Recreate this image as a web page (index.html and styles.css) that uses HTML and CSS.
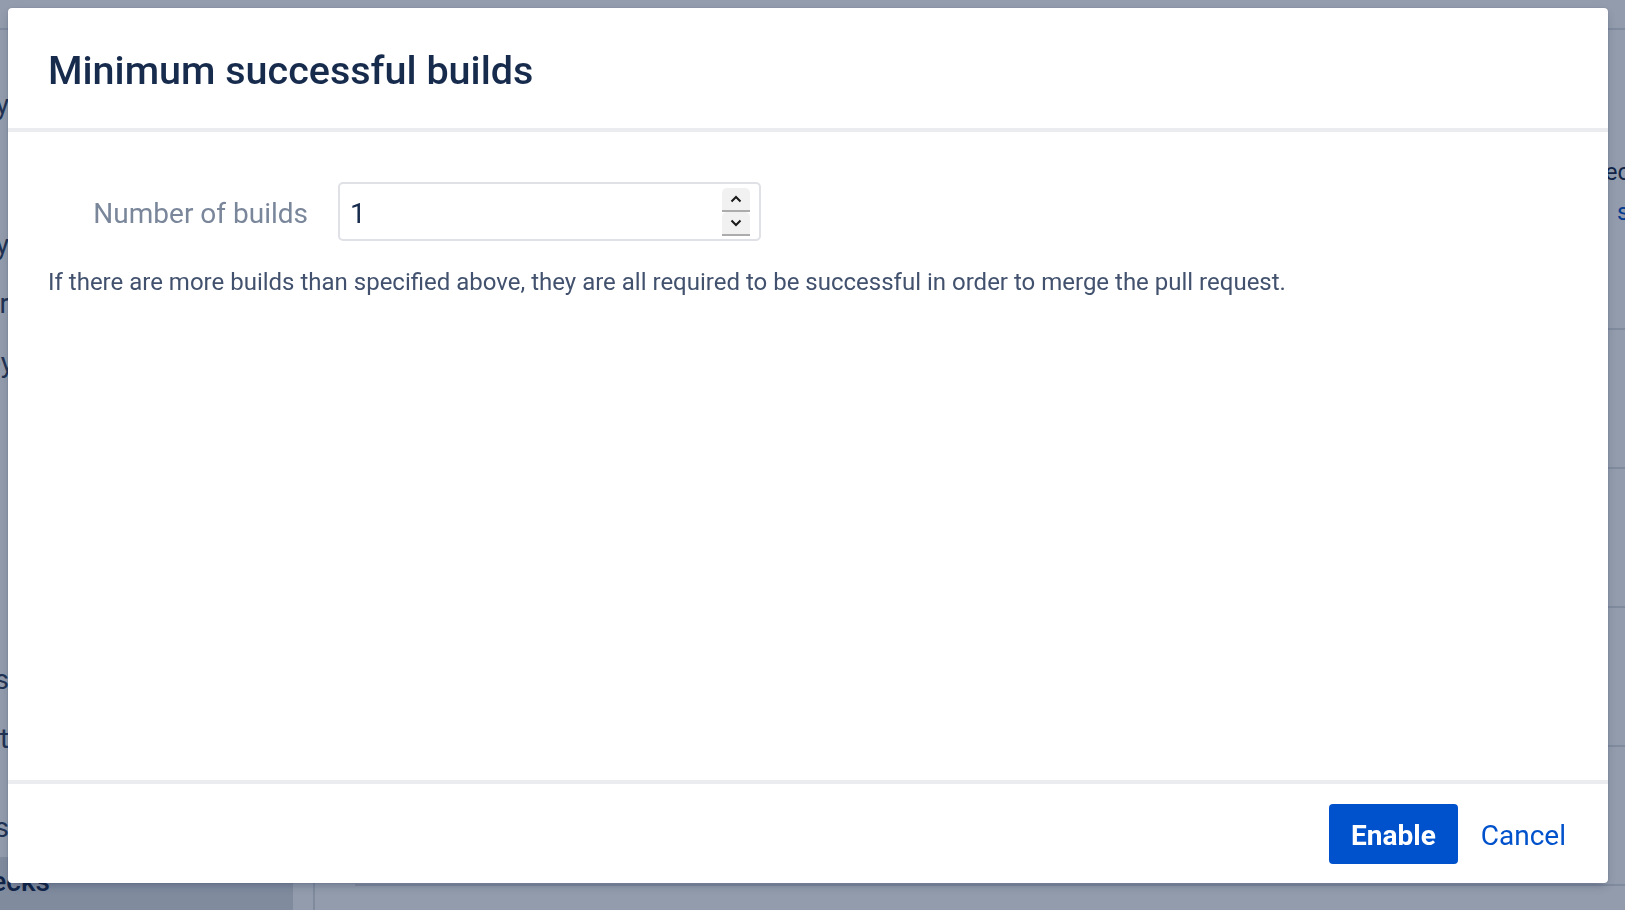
FILE: index.html
```html
<!DOCTYPE html>
<html lang="en">
<head>
<meta charset="utf-8">
<title>Minimum successful builds</title>
<link rel="stylesheet" href="styles.css">
</head>
<body>
  <div class="page">
    <header class="topbar"></header>
    <div class="layout">
      <nav class="sidebar">
        <div class="nav-heading"><span class="nav-clip"><span>Repository</span></span></div>
        <div class="nav-group first">
          <div class="nav-item"><span class="nav-clip"><span>Security</span></span></div>
          <div class="nav-item"><span class="nav-clip"><span>Branch manager</span></span></div>
          <div class="nav-item"><span class="nav-clip late"><span>Access key</span></span></div>
        </div>
        <div class="nav-group second">
          <div class="nav-item"><span class="nav-clip"><span>Hooks</span></span></div>
          <div class="nav-item"><span class="nav-clip"><span>Default reviewers list</span></span></div>
          <div class="nav-item spaced"><span class="nav-clip"><span>Auto-merge settings</span></span></div>
        </div>
        <div class="nav-item selected"><span class="nav-clip wide"><span>Merge checks</span></span></div>
      </nav>
      <main class="content">
        <div class="summary">
          <div></div>
          <div class="summary-side">
            <p class="side-text">Received</p>
            <p class="side-link">settings</p>
          </div>
        </div>
        <div class="row"></div>
        <div class="row"></div>
        <div class="row"></div>
        <div class="row"></div>
      </main>
    </div>
  </div>

  <div class="blanket">
    <section class="dialog" role="dialog" aria-labelledby="dlg-title">
      <header class="dialog-header">
        <h1 id="dlg-title" class="dialog-title">Minimum successful builds</h1>
      </header>
      <div class="dialog-body">
        <div class="field-row">
          <label class="field-label" for="builds">Number of builds</label>
          <div class="number-input">
            <span class="number-value" id="builds">1</span>
            <span class="spinner">
              <span class="spin-btn">
                <svg width="12" height="8" viewBox="0 0 12 8"><polyline points="1.5,6.5 6,2 10.5,6.5" fill="none" stroke="#1a1a1a" stroke-width="2"/></svg>
              </span>
              <span class="spin-btn">
                <svg width="12" height="8" viewBox="0 0 12 8"><polyline points="1.5,1.5 6,6 10.5,1.5" fill="none" stroke="#1a1a1a" stroke-width="2"/></svg>
              </span>
            </span>
          </div>
        </div>
        <p class="help">If there are more builds than specified above, they are all required to be successful in order to merge the pull request.</p>
      </div>
      <footer class="dialog-footer">
        <button class="btn btn-primary" type="button">Enable</button>
        <button class="btn btn-link" type="button">Cancel</button>
      </footer>
    </section>
  </div>
</body>
</html>
```

FILE: styles.css
```css
* { box-sizing: border-box; }

html, body {
  margin: 0;
  padding: 0;
}

body {
  width: 1625px;
  height: 910px;
  overflow: hidden;
  background: #ffffff;
  font-family: Roboto, "Noto Sans", "Liberation Sans", sans-serif;
  color: #172b4d;
}

/* ---------- background page ---------- */
.page {
  height: 910px;
  display: flex;
  flex-direction: column;
}

.topbar {
  height: 30px;
  border-bottom: 2px solid #dfe1e6;
  flex: none;
}

.layout {
  flex: 1;
  display: flex;
}

.sidebar {
  width: 315px;
  flex: none;
  padding-right: 20px;
  border-right: 2px solid #dfe1e6;
  display: flex;
  flex-direction: column;
  font-size: 28px;
  color: #344563;
}

.nav-heading {
  height: 59px;
  margin-top: 45px;
  display: flex;
  align-items: center;
}

.nav-group.first { margin-top: 81px; }
.nav-group.second { margin-top: 258px; }

.nav-item {
  height: 59px;
  display: flex;
  align-items: center;
}

.nav-item.spaced { margin-top: 30px; }

.nav-clip {
  width: 9px;
  display: flex;
  justify-content: flex-end;
  white-space: nowrap;
}

.nav-clip.late { width: 14px; }
.nav-clip.wide { width: 50px; }

.nav-item.selected {
  margin-top: 0;
  height: 58px;
  padding-bottom: 10px;
  background: #dfe1e6;
  border-radius: 0 6px 6px 0;
  font-weight: 500;
  color: #172b4d;
}

.content {
  flex: 1;
  padding-left: 40px;
  display: flex;
  flex-direction: column;
}

.summary {
  height: 300px;
  border-bottom: 2px solid #dfe1e6;
  display: grid;
  grid-template-columns: 1fr 35px;
  padding-top: 122px;
}

.summary-side {
  white-space: nowrap;
  font-size: 24px;
  line-height: 40px;
}

.summary-side p { margin: 0; }
.side-text { color: #172b4d; }
.side-link { color: #0052cc; text-indent: 27px; }

.row {
  height: 139px;
  border-bottom: 2px solid #dfe1e6;
  flex: none;
}

/* ---------- modal ---------- */
.blanket {
  position: fixed;
  inset: 0;
  background: rgba(9, 30, 66, 0.44);
  padding: 8px 0 0 8px;
}

.dialog {
  width: 1600px;
  height: 875px;
  background: #ffffff;
  border-radius: 4px;
  display: flex;
  flex-direction: column;
  box-shadow: 0 4px 10px -2px rgba(9, 30, 66, 0.3), 0 0 1px rgba(9, 30, 66, 0.31);
}

.dialog-header {
  height: 124px;
  flex: none;
  padding: 6px 40px 0;
  display: flex;
  align-items: center;
  border-bottom: 4px solid #ebecf0;
}

.dialog-title {
  margin: 0;
  font-size: 39.5px;
  line-height: 48px;
  font-weight: 500;
  color: #172b4d;
}

.dialog-body {
  flex: 1;
  padding: 50px 40px 0;
}

.field-row {
  display: flex;
  align-items: center;
}

.field-label {
  width: 260px;
  margin-right: 30px;
  padding-top: 3px;
  text-align: right;
  font-size: 28px;
  color: #7a869a;
}

.number-input {
  width: 423px;
  height: 59px;
  border: 2px solid #dfe1e6;
  border-radius: 5px;
  display: flex;
  align-items: center;
  padding: 0 9px 0 10px;
  font-size: 28px;
  color: #172b4d;
}

.number-value { flex: 1; padding-top: 3px; }

.spinner {
  display: flex;
  flex-direction: column;
}

.spin-btn {
  width: 28px;
  height: 24px;
  background: #f1f1f1;
  border-radius: 5px 5px 0 0;
  border-bottom: 2px solid #acacac;
  display: flex;
  align-items: center;
  justify-content: center;
}

.help {
  margin: 24px 0 0;
  font-size: 24px;
  line-height: 34px;
  color: #42526e;
}

.dialog-footer {
  height: 103px;
  flex: none;
  border-top: 4px solid #ebecf0;
  display: flex;
  justify-content: flex-end;
  align-items: center;
  padding-right: 21px;
}

.btn {
  font-family: inherit;
  font-size: 28px;
  height: 60px;
  border: none;
  border-radius: 4px;
  cursor: pointer;
  padding: 3px 22px 0;
}

.btn-primary {
  background: #0052cc;
  color: #ffffff;
  font-weight: 700;
}

.btn-link {
  background: transparent;
  color: #0052cc;
  font-weight: 400;
  padding: 3px 21px 0 23px;
}
```
